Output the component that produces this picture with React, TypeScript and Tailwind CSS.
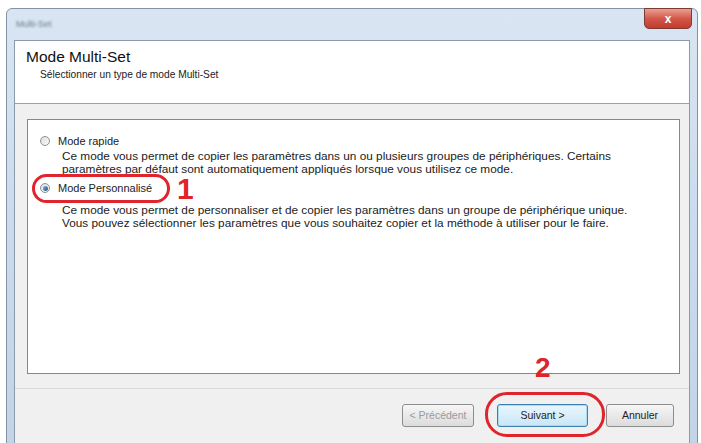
import React from "react";

function Radio({ checked }: { checked?: boolean }) {
  return (
    <span className="relative inline-flex w-[10px] h-[10px] rounded-full border border-[#8e9196] bg-gradient-to-br from-[#dcdcdc] to-[#fafafa] items-center justify-center shrink-0">
      {checked && <span className="w-[5px] h-[5px] rounded-full bg-gradient-to-br from-[#7fb3da] to-[#1f4f82]" />}
    </span>
  );
}

function Btn({ children, disabled, focus }: { children: React.ReactNode; disabled?: boolean; focus?: boolean }) {
  return (
    <div
      className={
        "h-[23px] flex items-center justify-center rounded-[3px] border text-[10.5px] " +
        (focus
          ? "border-[#3c7fb1] bg-gradient-to-b from-[#eaf6fd] to-[#c9e6f7] text-[#222] shadow-[inset_0_0_0_1px_#a8dcf5]"
          : "border-[#8d8d8d] bg-gradient-to-b from-[#f6f6f6] to-[#dcdcdc] " + (disabled ? "text-[#9a9a9a]" : "text-[#222]"))
      }
    >
      {children}
    </div>
  );
}

export default function App() {
  return (
    <div className="w-[701px] h-[443px] bg-white overflow-hidden relative font-['Liberation_Sans',Arial,sans-serif]">
      <div className="pt-[8px] pl-[6px] pr-[3px] h-full">
        <div className="h-[440px] rounded-t-[6px] border border-[#8393a5] bg-gradient-to-b from-[#d9e5f2] via-[#cbdbec] to-[#c3d4e7] flex flex-col">
          {/* title bar */}
          <div className="h-[31px] flex justify-between relative">
            <div className="pl-[9px] pt-[9px] text-[9px] text-[#6b7a8a] blur-[1.2px] select-none">Multi-Set</div>
            <div className="mr-[5px] -mt-[1px] w-[48px] h-[21px] rounded-b-[5px] border border-[#7d3a33] bg-gradient-to-b from-[#e8a093] via-[#d2574a] to-[#c23a2d] flex items-center justify-center text-white text-[12px] font-bold">
              x
            </div>
          </div>
          {/* client area */}
          <div className="flex-1 mx-[7px] mb-[3px] border border-[#8c9bab] bg-[#f0f0f0] flex flex-col">
            <div className="h-[63px] bg-white border-b border-[#a0a0a0] pl-[11px] pt-[7px]">
              <div className="text-[15.5px] text-[#111] leading-[18px]">Mode Multi-Set</div>
              <div className="pl-[14px] pt-[2px] text-[10.2px] text-[#222] leading-[13px]">Sélectionner un type de mode Multi-Set</div>
            </div>
            <div className="pl-[12px] pr-[9px] pt-[15px]">
              <div className="h-[255px] bg-white border border-[#828790] pl-[12px] pt-[14px] text-[11.8px] text-[#222]">
                <div className="flex items-center gap-[8px] h-[14px]">
                  <Radio />
                  <span className="text-[11px]">Mode rapide</span>
                </div>
                <div className="pl-[22px] pt-[2px] leading-[13px]">
                  <div>Ce mode vous permet de copier les paramètres dans un ou plusieurs groupes de périphériques. Certains</div>
                  <div>paramètres par défaut sont automatiquement appliqués lorsque vous utilisez ce mode.</div>
                </div>
                <div className="flex items-center gap-[8px] h-[14px] mt-[5px]">
                  <Radio checked />
                  <span className="text-[11px]">Mode Personnalisé</span>
                </div>
                <div className="pl-[22px] pt-[9px] leading-[13px]">
                  <div>Ce mode vous permet de personnaliser et de copier les paramètres dans un groupe de périphérique unique.</div>
                  <div>Vous pouvez sélectionner les paramètres que vous souhaitez copier et la méthode à utiliser pour le faire.</div>
                </div>
              </div>
            </div>
            <div className="mt-[14px] border-t border-[#d9d9d9] shadow-[inset_0_1px_0_#ffffff]" />
            <div className="flex-1 flex justify-end items-start pt-[15px] pr-[15px]">
              <div className="w-[72px]"><Btn disabled>&lt; Précédent</Btn></div>
              <div className="w-[91px] ml-[23px]"><Btn focus>Suivant &gt;</Btn></div>
              <div className="w-[68px] ml-[18px]"><Btn>Annuler</Btn></div>
            </div>
          </div>
        </div>
      </div>

      {/* annotations */}
      <div className="absolute left-[32px] top-[174px] w-[138px] h-[29px] rounded-[15px] border-[3px] border-[#e0242b]" />
      <div className="absolute left-[177px] top-[177px] text-[#e0242b] font-bold text-[30px] leading-[24px]">1</div>
      <div className="absolute left-[485px] top-[392px] w-[120px] h-[45px] rounded-[22px] border-[3px] border-[#e0242b]" />
      <div className="absolute left-[535px] top-[352px] text-[#e0242b] font-bold text-[28px] leading-[32px]">2</div>
    </div>
  );
}
